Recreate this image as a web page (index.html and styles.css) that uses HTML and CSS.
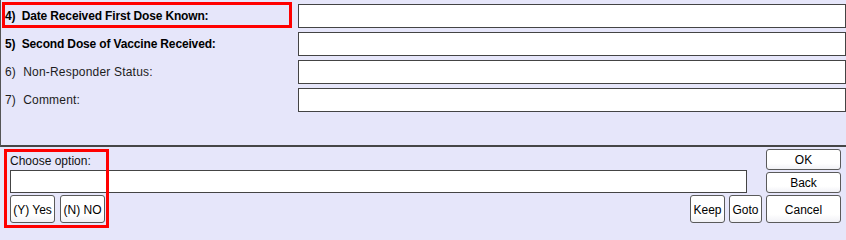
FILE: index.html
```html
<!DOCTYPE html>
<html lang="en">
<head>
<meta charset="utf-8">
<title>Vaccine form</title>
<link rel="stylesheet" href="styles.css">
</head>
<body>
<div class="screen">
  <div class="top">
    <div class="row">
      <span class="label bold">4)  Date Received First Dose Known:</span>
      <div class="field"></div>
      <div class="mark mark-row"></div>
    </div>
    <div class="row">
      <span class="label bold">5)  Second Dose of Vaccine Received:</span>
      <div class="field"></div>
    </div>
    <div class="row">
      <span class="label">6)  Non-Responder Status:</span>
      <div class="field"></div>
    </div>
    <div class="row">
      <span class="label">7)  Comment:</span>
      <div class="field"></div>
    </div>
  </div>
  <div class="bottom">
    <div class="mark mark-choose"></div>
    <div class="left">
      <div class="choose-label">Choose option:</div>
      <div class="choose-input"></div>
      <div class="btn-row">
        <button class="btn btn-yes">(Y) Yes</button>
        <button class="btn btn-no">(N) NO</button>
        <div class="spacer"></div>
        <button class="btn btn-keep">Keep</button>
        <button class="btn btn-goto">Goto</button>
      </div>
    </div>
    <div class="right">
      <button class="btn btn-ok">OK</button>
      <button class="btn btn-back">Back</button>
      <button class="btn btn-cancel">Cancel</button>
    </div>
  </div>
</div>
</body>
</html>
```
FILE: styles.css
```css
* { box-sizing: border-box; }
html, body {
  margin: 0;
  padding: 0;
}
body {
  font-family: "Liberation Sans", Arial, sans-serif;
  font-size: 12px;
  color: #000;
  background-color: #e6e6fa;
  width: 846px;
  height: 228px;
  overflow: hidden;
}
.screen {
  width: 846px;
  height: 228px;
  display: flex;
  flex-direction: column;
}
.top {
  height: 147px;
  border-left: 1px solid #555;
  border-bottom: 2px solid #464646;
  padding-top: 4px;
  display: flex;
  flex-direction: column;
  gap: 4px;
}
.row {
  position: relative;
  display: flex;
  align-items: center;
  height: 24px;
}
.label {
  width: 297px;
  padding-left: 4px;
  white-space: pre;
  color: #1c1c1c;
  line-height: 14px;
  letter-spacing: 0.2px;
}
.label.bold {
  font-weight: bold;
  color: #000;
  letter-spacing: -0.15px;
}
.field {
  flex: 1;
  height: 24px;
  background: #fff;
  border: 1px solid #444;
}
.mark {
  position: absolute;
  border: 3px solid #f00;
  pointer-events: none;
}
.mark-row {
  left: 1px;
  top: -2px;
  width: 290px;
  height: 26px;
}
.bottom {
  position: relative;
  flex: 1;
  display: flex;
  gap: 4px;
  padding: 2px 5px 0 10px;
}
.mark-choose {
  left: 4px;
  top: 2px;
  width: 105px;
  height: 79px;
}
.left {
  flex: 1;
  display: flex;
  flex-direction: column;
}
.choose-label {
  height: 21px;
  padding-top: 5px;
  line-height: 14px;
  color: #111;
}
.choose-input {
  width: 737px;
  height: 23px;
  background: #fff;
  border: 1px solid #444;
}
.btn-row {
  display: flex;
  gap: 5px;
  margin-top: 2px;
  height: 28px;
}
.spacer { flex: 1; }
.btn {
  font-family: "Liberation Sans", Arial, sans-serif;
  font-size: 12px;
  color: #000;
  background: linear-gradient(#ffffff, #ffffff 70%, #f1f1f6);
  border: 1px solid #5a5a5a;
  border-radius: 3px;
  padding: 0;
  margin: 0;
  line-height: 14px;
  text-align: center;
}
.btn-yes { width: 45px; padding-top: 1px; }
.btn-no { width: 45px; padding-top: 1px; }
.btn-keep { width: 35px; padding-top: 1px; }
.btn-goto { width: 33px; margin-left: -1px; padding-top: 1px; }
.right {
  width: 75px;
  display: flex;
  flex-direction: column;
  gap: 2px;
}
.btn-ok, .btn-back { height: 21px; width: 75px; padding-top: 1px; }
.btn-cancel { height: 28px; width: 75px; padding-top: 1px; }
```
